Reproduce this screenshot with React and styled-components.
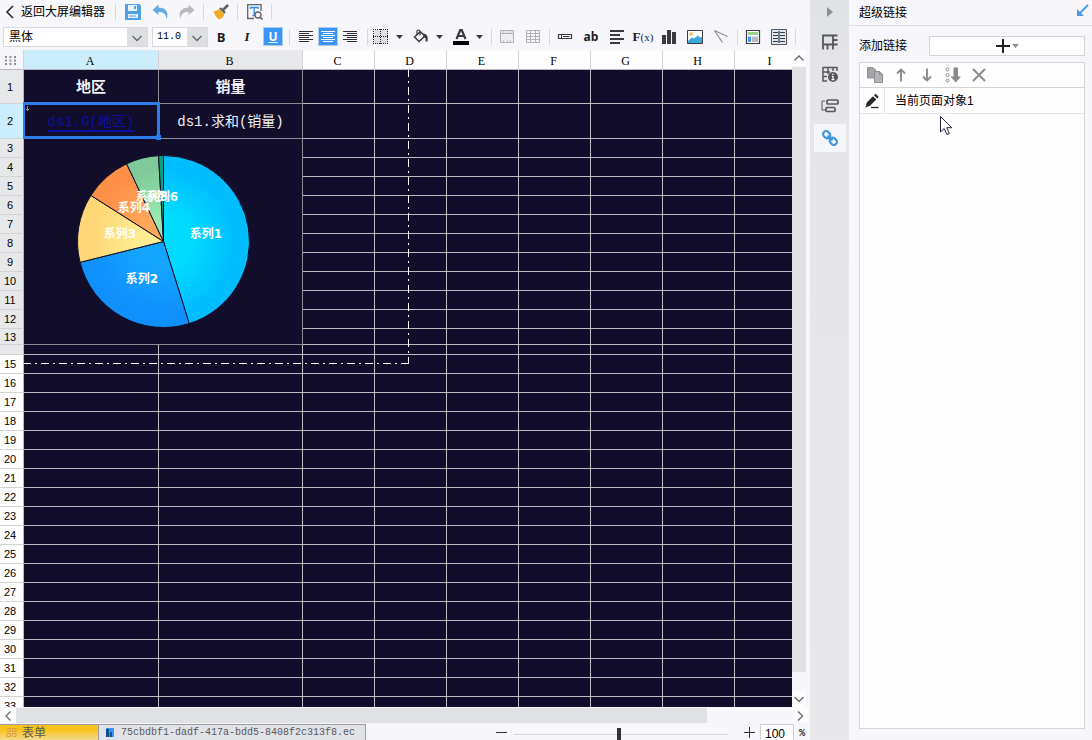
import React, { useState } from 'react'
import styled, { createGlobalStyle } from 'styled-components'

const GlobalStyle = createGlobalStyle`
  * {
    box-sizing: border-box;
  }

  body {
    margin: 0;
    overflow: hidden;
    font-family: "Liberation Sans", "Noto Sans CJK SC", sans-serif;
    font-size: 12px;
    line-height: 16px;
    color: #1c1c1e;
    background: #f6f6fb;
  }

  button, input, select {
    margin: 0;
    padding: 0;
    border: 0;
    border-radius: 0;
    outline: 0;
    font: inherit;
    color: inherit;
    background: none;
  }
`

const Page = styled.div`
  display: flex;
  height: 100vh;
`

const Editor = styled.main`
  display: flex;
  flex: 1;
  flex-direction: column;
  min-width: 0;
`

const Bar = styled.div`
  display: flex;
  align-items: center;
  height: ${(props) => props.$height}px;
  padding-left: 3px;
`

const BackButton = styled.button`
  display: flex;
  align-items: center;
  gap: 6px;
  width: 109px;
  white-space: nowrap;
  color: #000;
`

const ToolButton = styled.button`
  display: flex;
  flex: none;
  align-items: center;
  justify-content: center;
  width: ${(props) => props.$width || 26}px;
  height: 20px;
`

const Toggle = styled.span`
  display: flex;
  align-items: center;
  justify-content: center;
  width: 20px;
  height: 19px;
  border: 1px solid ${(props) => (props.$on ? '#a9cdf0' : 'transparent')};
  color: ${(props) => (props.$on ? '#fff' : '#2f2f33')};
  background: ${(props) => (props.$on ? '#3b95f5' : 'transparent')};
`

const Separator = styled.span`
  display: flex;
  flex: none;
  justify-content: center;
  width: ${(props) => props.$width || 6}px;

  &::after {
    content: "";
    width: 1px;
    height: 16px;
    background: #d8d8dc;
  }
`

const AlignGroup = styled.div`
  display: flex;
  padding: 0 3px;
`

const ColorGroup = styled.div`
  display: flex;
  gap: 4px;
  padding-right: 2px;
`

const ColorPair = styled.div`
  display: flex;
`

const Letter = styled.span`
  font-size: ${(props) => props.$size || 12}px;
  font-weight: bold;
  font-style: ${(props) => (props.$italic ? 'italic' : 'normal')};
  font-family: ${(props) => (props.$serif ? '"Liberation Serif", serif' : '"Open Sans", sans-serif')};
  line-height: 16px;
  text-decoration: ${(props) => (props.$underline ? 'underline' : 'none')};

  small {
    font-size: 11px;
    font-weight: normal;
  }
`

const SelectBox = styled.label`
  position: relative;
  display: flex;
  width: ${(props) => props.$width}px;
  height: 20px;
  margin-right: ${(props) => props.$gap || 0}px;
  border: 1px solid #dadade;
  background: linear-gradient(90deg, #fff calc(100% - 20px), #dedfe1 calc(100% - 20px));

  select {
    width: 100%;
    padding-left: ${(props) => (props.$mono ? 4 : 5)}px;
    appearance: none;
    color: #000;
    font-family: ${(props) => (props.$mono ? '"Liberation Mono", monospace' : 'inherit')};
    font-size: ${(props) => (props.$mono ? 10 : 12)}px;
  }

  svg {
    position: absolute;
    top: 5px;
    right: 5px;
    pointer-events: none;
  }
`

const SheetArea = styled.div`
  display: flex;
  flex: 1;
  min-height: 0;
  padding-right: 4px;
`

const SheetView = styled.div`
  position: relative;
  flex: 1;
  min-width: 0;
  overflow: hidden;
  background: #120d2a;
`

const Sheet = styled.table`
  width: 807px;
  table-layout: fixed;
  border-collapse: separate;
  border-spacing: 0;
`

const headColor = (props) => {
  if (props.$active) return '#cceefc'
  return props.$used ? '#e7e8ea' : '#fefefe'
}

const ColHead = styled.th`
  height: 20px;
  padding: 2px 2px 0 0;
  border-right: 1px solid #d3d3d6;
  border-bottom: 1px solid #b9b9bd;
  font: 12px/14px "Liberation Serif", serif;
  color: #000;
  background: ${headColor};
`

const Corner = styled(ColHead)`
  background: #f6f6fa;
`

const RowHead = styled.th`
  height: ${(props) => props.$height}px;
  padding: 0 3px 0 0;
  border-right: 1px solid #b9b9bd;
  border-bottom: 1px solid #d3d3d6;
  font-size: 11px;
  font-weight: normal;
  line-height: ${(props) => (props.$height < 12 ? 8 : 14)}px;
  color: #000;
  background: ${headColor};
`

const Cell = styled.td`
  position: relative;
  padding: 0;
  border-right: 1px solid ${(props) => (props.$dim ? '#8c8b95' : '#bebdc4')};
  border-bottom: 1px solid ${(props) => (props.$dim ? '#8c8b95' : '#bebdc4')};
`

const TextCell = styled(Cell)`
  padding-top: ${(props) => (props.$title ? 5 : 2)}px;
  font-family: "Liberation Mono", "Noto Sans CJK SC", monospace;
  font-size: ${(props) => (props.$title ? 15 : 14)}px;
  font-weight: ${(props) => (props.$title ? 'bold' : 'normal')};
  line-height: 20px;
  text-align: center;
  white-space: nowrap;
  color: #f0f0f4;
`

const CellLink = styled.a`
  color: #0c10a4;
  text-decoration: underline 2px;
  text-decoration-skip-ink: none;
  text-underline-offset: 4px;
`

const Selection = styled.span`
  position: absolute;
  z-index: 1;
  inset: -2px -2px -1px -1px;
  border: 3px solid #2b7de9;
  border-left-width: 2px;
  pointer-events: none;

  &::after {
    content: "";
    position: absolute;
    right: -4px;
    bottom: -4px;
    width: 5px;
    height: 5px;
    background: #2b7de9;
  }
`

const ExpandMark = styled.svg`
  position: absolute;
  top: 2px;
  left: 1px;
`

const Chart = styled.svg`
  display: block;
  margin: auto;

  text {
    font-family: "DejaVu Sans", "Noto Sans CJK SC", sans-serif;
    font-size: 12px;
    font-weight: bold;
    fill: #fff;
    text-anchor: middle;
  }
`

const PageEdge = styled.svg`
  position: absolute;
  top: 0;
  left: 0;
  pointer-events: none;
`

const VScroll = styled.div`
  display: flex;
  flex-direction: column;
  width: 14px;
`

const HScroll = styled.div`
  display: flex;
  height: 17px;
  padding: 1px 2px 1px 0;
`

const ScrollButton = styled.button`
  display: flex;
  flex: none;
  align-items: center;
  justify-content: center;
  width: ${(props) => (props.$wide ? 16 : 14)}px;
  height: ${(props) => (props.$wide ? 15 : 16)}px;
  background: #fdfdfe;
`

const Track = styled.div`
  display: flex;
  flex: 1;
  flex-direction: ${(props) => (props.$vertical ? 'column' : 'row')};
  padding-top: ${(props) => (props.$vertical ? 1 : 0)}px;
`

const Thumb = styled.div`
  flex: 0 0 ${(props) => props.$length}%;
  background: #e0e1e3;
`

const Footer = styled.footer`
  display: flex;
  height: 16px;
  overflow: hidden;
`

const SheetTab = styled.button`
  display: flex;
  align-items: center;
  gap: 5px;
  width: ${(props) => (props.$form ? 99 : 267)}px;
  height: 18px;
  padding: 0 0 2px 6px;
  border-top: 1px solid #9b9b9f;
  border-right: 1px solid #9b9b9f;
  white-space: nowrap;
  color: #55585c;
  background: ${(props) =>
    props.$form ? 'linear-gradient(#f9c31d 30%, #f3dfa6)' : '#e2e3e6'};
`

const FileName = styled.span`
  font: 10px/14px "Liberation Mono", monospace;
`

const Zoom = styled.div`
  display: flex;
  flex: 1;
  align-items: center;
  justify-content: flex-end;
  gap: 5px;
  height: 20px;
  padding-right: 2px;
`

const ZoomSlider = styled.input`
  width: 214px;
  height: 12px;
  margin: 0 11px 0 2px;
  appearance: none;
  background: linear-gradient(#d4d5d9, #d4d5d9) center / 100% 1px no-repeat;

  &::-webkit-slider-thumb {
    appearance: none;
    width: 4px;
    height: 12px;
    background: #333;
  }
`

const ZoomValue = styled.input`
  width: 34px;
  height: 20px;
  padding: 0 0 1px 4px;
  border: 1px solid #cfcfd4;
  color: #000;
  background: #fff;
`

const Percent = styled.label`
  width: 9px;
  font: bold 10px/14px "Liberation Mono", monospace;
`

const IconRail = styled.nav`
  display: flex;
  flex: none;
  flex-direction: column;
  align-items: center;
  gap: 4px;
  width: 39px;
  background: linear-gradient(#e0e2e6, #e5e5e8 60px, #e8e8eb);
`

const RailButton = styled.button`
  display: flex;
  align-items: center;
  justify-content: center;
  width: 32px;
  height: ${(props) => (props.$small ? 24 : 28)}px;
  color: #55575b;
  background: ${(props) => (props.$on ? '#f5f6fa' : 'none')};
`

const Panel = styled.aside`
  display: flex;
  flex: none;
  flex-direction: column;
  width: 243px;
`

const PanelHeader = styled.header`
  display: flex;
  align-items: center;
  justify-content: space-between;
  height: 26px;
  padding: 0 3px 0 10px;
  border-bottom: 1px solid #dedee3;
  color: #000;
`

const PanelBody = styled.div`
  display: flex;
  flex: 1;
  flex-direction: column;
  gap: 6px;
  padding: 10px 7px 11px 10px;
`

const Field = styled.div`
  display: flex;
  align-items: center;
  justify-content: space-between;
  color: #000;
`

const AddButton = styled.button`
  display: flex;
  align-items: center;
  justify-content: center;
  gap: 2px;
  width: 156px;
  height: 20px;
  border: 1px solid #d3d4d8;
  background: #fff;
`

const LinkBox = styled.section`
  flex: 1;
  border: 1px solid #d3d4d8;
  background: #fefefe;
`

const LinkTools = styled.div`
  display: flex;
  align-items: center;
  height: 25px;
  padding-left: 2px;
  border-bottom: 1px solid #d3d4d8;
`

const LinkRow = styled.div`
  position: relative;
  display: flex;
  align-items: center;
  height: 26px;
  border-bottom: 1px solid #e6e6ea;
  color: #000;
`

const EditButton = styled.button`
  display: flex;
  align-items: center;
  justify-content: center;
  width: 25px;
  height: 25px;
  margin-right: 10px;
  border-right: 1px solid #e6e6ea;
`

const Pointer = styled.svg`
  position: absolute;
  top: 28px;
  left: 80px;
  pointer-events: none;
`

const Icon = ({ size = 16, children }) => (
  <svg width={size} height={size} viewBox={`0 0 ${size} ${size}`} fill="none" aria-hidden="true">
    {children}
  </svg>
)

const chevrons = {
  down: 'M0.5 3 L5 7.5 L9.5 3',
  up: 'M0.5 7.5 L5 3 L9.5 7.5',
  left: 'M7.5 0.5 L3 5 L7.5 9.5',
  right: 'M3 0.5 L7.5 5 L3 9.5'
}

const Chevron = ({ to, color = '#66676b' }) => (
  <svg width="10" height="10" viewBox="0 0 10 10" fill="none">
    <path d={chevrons[to]} stroke={color} strokeWidth="1.3" />
  </svg>
)

const Caret = ({ color = '#3a3b3e' }) => (
  <svg width="7" height="4" viewBox="0 0 7 4">
    <path d="M0 0 H7 L3.5 4 Z" fill={color} />
  </svg>
)

const alignLines = {
  left: ['0-14', '0-10', '0-14', '0-10', '0-14', '0-10'],
  center: ['0-14', '2-12', '0-14', '2-12', '0-14', '2-12'],
  right: ['0-14', '4-14', '0-14', '4-14', '0-14', '4-14']
}

const AlignIcon = ({ side }) => (
  <svg width="14" height="12" viewBox="0 0 14 12" fill="none">
    {alignLines[side].map((line, i) => {
      const [from, to] = line.split('-')
      return <path key={i} d={`M${from} ${i * 2 + 0.5} H${to}`} stroke="currentColor" />
    })}
  </svg>
)

const SaveIcon = () => (
  <Icon>
    <path d="M0 0 H14 L16 2 V16 H0 Z" fill="#519fe6" />
    <path d="M3 1 H12 V7 H3 Z" fill="#e9f3fc" />
    <path d="M9 2 H11 V5 H9 Z" fill="#519fe6" />
    <path d="M3 10 H13 V14 H3 Z" fill="#e9f3fc" />
    <path d="M4 12 H11" stroke="#519fe6" />
  </Icon>
)

const UndoIcon = () => (
  <Icon>
    <path d="M6.5 0.5 L0.5 6 L6.5 11 V8 C11 7.5 14 10 14.5 15 C17.5 8 13 3.5 6.5 3.5 Z" fill="#67a9e2" />
  </Icon>
)

const RedoIcon = () => (
  <Icon>
    <path d="M9.5 0.5 L15.5 6 L9.5 11 V8 C5 7.5 2 10 1.5 15 C-1.5 8 3 3.5 9.5 3.5 Z" fill="#b9babd" />
  </Icon>
)

const BrushIcon = () => (
  <Icon>
    <path d="M15 1 L10 6" stroke="#606266" strokeWidth="2.6" />
    <path d="M7 4 L12 9" stroke="#606266" strokeWidth="2.4" />
    <path d="M6 5 L11.5 10.5 C10.5 13 8.5 15 6 15.5 C3.5 14 1.5 10.5 0.5 7 C3 7 4.5 6.5 6 5 Z" fill="#f3aa27" />
  </Icon>
)

const PreviewIcon = () => (
  <Icon>
    <path d="M7 14.5 H0.7 V0.7 H14 V7" stroke="#606266" strokeWidth="1.3" />
    <path d="M3.5 5 V3.5 H11 V5 M7.2 3.5 V11 M5.5 11.5 H8" stroke="#3b8de0" strokeWidth="1.4" />
    <circle cx="11" cy="11" r="3" stroke="#606266" strokeWidth="1.3" />
    <path d="M13 13 L15.5 15.5" stroke="#606266" strokeWidth="1.6" />
  </Icon>
)

const BorderIcon = () => (
  <Icon>
    <path d="M1 1 H15 V15 H1 Z" fill="#e0e0e3" />
    <path d="M0 0.5 H15 M0 7.5 H15 M0 14.5 H15 M0.5 0 V15 M7.5 0 V15 M14.5 0 V15" stroke="#222" strokeDasharray="1 1" />
  </Icon>
)

const BucketIcon = () => (
  <Icon>
    <path d="M6.5 3.5 L1.5 8 L6 12.5 L12 7 L7.5 3 Z" stroke="#3a3b3e" strokeWidth="1.5" />
    <path d="M4 6 V2 Q5.5 0 7 2 V6.5" stroke="#3a3b3e" strokeWidth="1.2" />
    <path d="M10.5 4.5 C14 5 15.5 7.5 14.5 12.5 H12.5 C13 9.5 12.5 8.5 10 8 Z" fill="#3a3b3e" />
  </Icon>
)

const FontColorIcon = () => (
  <Icon>
    <path d="M3.5 10 L7.5 0.5 H8.5 L12.5 10 M5 7 H11" stroke="#3a3b3e" strokeWidth="2.2" />
    <path d="M0 12 H16 V16 H0 Z" fill="#000" />
  </Icon>
)

const MergeIcon = () => (
  <Icon>
    <path d="M1.5 1.5 H14.5 V13.5 H1.5 Z M1.5 4.5 H14.5" fill="#eeeef1" stroke="#b0b1b5" />
    <path d="M4.5 2 V4 M8.5 2 V4 M11.5 2 V4 M4.5 11 V13 M8.5 11 V13 M11.5 11 V13" stroke="#c6c7ca" />
  </Icon>
)

const GridIcon = () => (
  <Icon>
    <path d="M1.5 1.5 H14.5 V13.5 H1.5 Z M1.5 4.5 H14.5 M1.5 7.5 H14.5 M1.5 10.5 H14.5 M5.5 1.5 V13.5 M10.5 1.5 V13.5" stroke="#b0b1b5" />
  </Icon>
)

const TextBoxIcon = () => (
  <Icon>
    <path d="M1.5 5.5 H14.5 V9.5 H1.5 Z" stroke="#3a3b3e" strokeWidth="1.2" />
    <path d="M4.5 5.5 V9.5 M6 7.5 H12.5" stroke="#3a3b3e" />
  </Icon>
)

const ParagraphIcon = () => (
  <Icon>
    <path d="M1 2 H15 M1 6 H11 M1 10 H15 M1 14 H11" stroke="#3a3b3e" strokeWidth="2" />
  </Icon>
)

const BarsIcon = () => (
  <Icon>
    <path d="M1 6 H5 V15 H1 Z M6 1 H10 V15 H6 Z M11 3 H15 V15 H11 Z" fill="#3a3b3e" />
  </Icon>
)

const PictureIcon = () => (
  <Icon>
    <path d="M0.5 1.5 H15.5 V14.5 H0.5 Z" fill="#fff" stroke="#3a3b3e" />
    <circle cx="4" cy="5" r="1.7" fill="#f2b63c" />
    <path d="M1 12 L5 8.5 L7 9.5 L11 6.5 L13 8.5 L15 8 V14 H1 Z" fill="#37a9dc" />
  </Icon>
)

const SlashIcon = () => (
  <Icon>
    <path d="M1.5 1.5 L14.5 7.5 M1.5 1.5 L9.5 13.5" stroke="#8d8e92" strokeWidth="1.2" />
  </Icon>
)

const ReportIcon = () => (
  <Icon>
    <path d="M1.5 1.5 H14.5 V14.5 H1.5 Z" fill="#fff" stroke="#3a3b3e" strokeWidth="1.2" />
    <path d="M3 3 H13 V6 H3 Z" fill="#9ad08a" />
    <path d="M3 7.5 H6 V13 H3 Z" fill="#3b95f5" />
    <path d="M7 7.5 H13 V13 H7 Z" fill="#b9bac6" />
  </Icon>
)

const BookIcon = () => (
  <Icon>
    <path d="M0.5 0.5 H15.5 V15.5 H0.5 Z" fill="#dbe7f4" stroke="#55575b" />
    <path d="M8 2 V14 M2 3.5 H7 M9 3.5 H14 M2 6.5 H7 M9 6.5 H14 M2 9.5 H7 M9 9.5 H14 M2 12.5 H7 M9 12.5 H14" stroke="#3a3b3e" strokeWidth="1.2" />
  </Icon>
)

const CellIcon = () => (
  <Icon>
    <path d="M1 15.5 V1.5 H15.5 M1 10.5 H15.5 M11 1.5 V15.5 M5.5 10.5 V15.5 M11 6 H15.5" stroke="currentColor" strokeWidth="1.8" />
  </Icon>
)

const CellInfoIcon = () => (
  <Icon>
    <path d="M5 15 H1 V1.5 H15 V5 M1 6 H8 M1 10.5 H5 M6 1.5 V8 M11 1.5 V5" stroke="currentColor" strokeWidth="1.5" />
    <circle cx="11" cy="11" r="5" fill="currentColor" />
    <path d="M11 7.5 V9 M11 10 V14 M9.8 10.3 H11 M9.5 13.7 H12.5" stroke="#fff" strokeWidth="1.2" />
  </Icon>
)

const WidgetIcon = () => (
  <svg width="18" height="14" viewBox="0 0 18 14" fill="none">
    <path d="M4 2 H1 V11 H4" stroke="currentColor" />
    <rect x="6" y="1" width="11" height="4" rx="1" stroke="currentColor" strokeWidth="1.7" />
    <rect x="5" y="8.5" width="9" height="4" rx="1" stroke="currentColor" strokeWidth="1.7" />
  </svg>
)

const HyperlinkIcon = () => (
  <Icon>
    <rect x="-3.8" y="-3" width="7.6" height="6" rx="3" transform="translate(4.7 4.7) rotate(45)" stroke="#4397e0" strokeWidth="2.2" />
    <rect x="-3.8" y="-3" width="7.6" height="6" rx="3" transform="translate(11.3 11.3) rotate(45)" stroke="#4397e0" strokeWidth="2.2" />
    <path d="M5.5 5.5 L10.5 10.5" stroke="#4397e0" strokeWidth="2" />
  </Icon>
)

const CopyIcon = () => (
  <Icon>
    <path d="M0.5 0.5 H6 L8.5 3 V11 H0.5 Z" fill="#a4a5a8" stroke="#8d8e92" />
    <path d="M7.5 4.5 H12.5 L15.5 7.5 V15.5 H7.5 Z" fill="#b3b4b7" stroke="#8d8e92" />
    <path d="M12.5 4.5 V7.5 H15.5" stroke="#8d8e92" />
  </Icon>
)

const ArrowIcon = ({ down }) => (
  <Icon>
    <path
      d={down ? 'M8 1.5 V13 M4 9.5 L8 13.5 L12 9.5' : 'M8 14.5 V3 M4 6.5 L8 2.5 L12 6.5'}
      stroke="#8a8b8f"
      strokeWidth="1.9"
    />
  </Icon>
)

const SortIcon = () => (
  <Icon>
    <circle cx="2.5" cy="2.5" r="1.5" stroke="#8a8b8f" />
    <circle cx="2.5" cy="8" r="1.5" stroke="#8a8b8f" />
    <circle cx="2.5" cy="13.5" r="1.5" stroke="#8a8b8f" />
    <path d="M8.5 0.5 H13 V9.5 H16 L10.8 15.5 L5.5 9.5 H8.5 Z" fill="#8a8b8f" />
  </Icon>
)

const RemoveIcon = () => (
  <Icon>
    <path d="M2 2 L14 14 M14 2 L2 14" stroke="#8a8b8f" strokeWidth="2" />
  </Icon>
)

const PencilIcon = () => (
  <Icon>
    <path d="M1.5 14.5 L2.8 9.5 L9 3.2 L12.3 6.5 L6 12.8 Z M10 2.2 L11.5 0.7 L14.6 3.8 L13.2 5.4 Z" fill="#26272a" />
    <path d="M7 14.5 H14.5" stroke="#26272a" strokeWidth="1.3" />
  </Icon>
)

const columns = [
  { name: 'A', width: 135 },
  { name: 'B', width: 144 },
  { name: 'C', width: 72 },
  { name: 'D', width: 72 },
  { name: 'E', width: 72 },
  { name: 'F', width: 72 },
  { name: 'G', width: 72 },
  { name: 'H', width: 72 },
  { name: 'I', width: 72 }
]

const rowHeights = { 1: 34, 2: 35, 13: 16, 14: 10 }
const rows = Array.from({ length: 33 }, (_, i) => i + 1)

const series = [
  { name: '系列1', from: 0, to: 162.6, fill: 'url(#cyan)', x: 182, y: 99 },
  { name: '系列2', from: 162.6, to: 256, fill: 'url(#blue)', x: 118, y: 144 },
  { name: '系列3', from: 256, to: 302.4, fill: 'url(#yellow)', x: 96, y: 99 },
  { name: '系列4', from: 302.4, to: 334.6, fill: 'url(#orange)', x: 110, y: 73 },
  { name: '系列5', from: 334.6, to: 356.7, fill: 'url(#green)', x: 128, y: 62 },
  { name: '系列6', from: 356.7, to: 360, fill: '#0c9f83', x: 138, y: 62 }
]

const gradients = [
  ['cyan', '#00dcff', '#00bdff'],
  ['blue', '#14a5ff', '#1090fc'],
  ['yellow', '#ffec90', '#ffd777'],
  ['orange', '#ffa75a', '#ff9048'],
  ['green', '#9ae8b0', '#7fca98']
]

const CX = 139.5
const CY = 102.5
const R = 86

const point = (deg) => {
  const rad = (deg * Math.PI) / 180
  return `${CX + R * Math.sin(rad)} ${CY - R * Math.cos(rad)}`
}

const PieChart = () => (
  <Chart width="278" height="205" viewBox="0 0 278 205">
    <defs>
      {gradients.map(([id, inner, outer]) => (
        <radialGradient key={id} id={id} gradientUnits="userSpaceOnUse" cx={CX} cy={CY} r={R}>
          <stop offset="0.3" stopColor={inner} />
          <stop offset="0.85" stopColor={outer} />
        </radialGradient>
      ))}
    </defs>
    {series.map((item) => (
      <path
        key={item.name}
        d={`M${CX} ${CY} L${point(item.from)} A${R} ${R} 0 0 1 ${point(item.to)} Z`}
        fill={item.fill}
        stroke="#10102a"
      />
    ))}
    {series.map((item) => (
      <text key={item.name} x={item.x} y={item.y}>{item.name}</text>
    ))}
  </Chart>
)

const SheetRow = ({ row }) => {
  const inChart = row >= 3 && row <= 13
  const height = rowHeights[row] || 19

  return (
    <tr>
      <RowHead scope="row" $height={height} $active={row === 2} $used={row <= 14}>
        {row !== 14 && row}
      </RowHead>
      {row === 3 && (
        <Cell colSpan={2} rowSpan={11} $dim>
          <PieChart />
        </Cell>
      )}
      {row === 1 && (
        <>
          <TextCell $dim $title>地区</TextCell>
          <TextCell $dim $title>销量</TextCell>
        </>
      )}
      {row === 2 && (
        <>
          <TextCell $dim>
            <CellLink href="#link">ds1.G(地区)</CellLink>
            <Selection />
            <ExpandMark width="5" height="5" viewBox="0 0 5 5">
              <path d="M2.5 0 V5 M0.5 2.5 L2.5 4.5 L4.5 2.5" stroke="#8c8b95" fill="none" />
            </ExpandMark>
          </TextCell>
          <TextCell $dim>ds1.求和(销量)</TextCell>
        </>
      )}
      {columns.slice(inChart || row < 3 ? 2 : 0).map((col) => (
        <Cell key={col.name} />
      ))}
    </tr>
  )
}

const TopBar = () => (
  <Bar $height={23}>
    <BackButton>
      <svg width="12" height="14" viewBox="0 0 12 14" fill="none">
        <path d="M10 1 L4 7 L10 13" stroke="#222" strokeWidth="1.5" />
      </svg>
      返回大屏编辑器
    </BackButton>
    <Separator $width={7} />
    <ToolButton $width={27} aria-label="保存"><SaveIcon /></ToolButton>
    <ToolButton $width={27} aria-label="撤销"><UndoIcon /></ToolButton>
    <ToolButton $width={27} aria-label="重做"><RedoIcon /></ToolButton>
    <Separator $width={7} />
    <ToolButton $width={27} aria-label="格式刷"><BrushIcon /></ToolButton>
    <Separator $width={7} />
    <ToolButton $width={27} aria-label="预览"><PreviewIcon /></ToolButton>
    <Separator $width={7} />
  </Bar>
)

const FormatBar = () => {
  const [align, setAlign] = useState('center')
  const [underline, setUnderline] = useState(true)

  return (
    <Bar $height={27}>
      <SelectBox $width={145} $gap={4}>
        <select aria-label="字体" defaultValue="黑体">
          <option>黑体</option>
          <option>宋体</option>
        </select>
        <Chevron to="down" />
      </SelectBox>
      <SelectBox $width={56} $mono>
        <select aria-label="字号" defaultValue="11.0">
          <option>11.0</option>
          <option>12.0</option>
        </select>
        <Chevron to="down" />
      </SelectBox>
      <ToolButton><Letter $size={13}>B</Letter></ToolButton>
      <ToolButton><Letter $italic $serif $size={13}>I</Letter></ToolButton>
      <ToolButton onClick={() => setUnderline(!underline)}>
        <Toggle $on={underline}><Letter $underline>U</Letter></Toggle>
      </ToolButton>
      <Separator />
      <AlignGroup>
        {['left', 'center', 'right'].map((side) => (
          <ToolButton key={side} $width={22} aria-label={side} onClick={() => setAlign(side)}>
            <Toggle $on={align === side}><AlignIcon side={side} /></Toggle>
          </ToolButton>
        ))}
      </AlignGroup>
      <Separator />
      <ColorGroup>
        <ColorPair>
          <ToolButton $width={22} aria-label="边框"><BorderIcon /></ToolButton>
          <ToolButton $width={14} aria-label="边框选项"><Caret /></ToolButton>
        </ColorPair>
        <ColorPair>
          <ToolButton $width={22} aria-label="填充"><BucketIcon /></ToolButton>
          <ToolButton $width={14} aria-label="填充选项"><Caret /></ToolButton>
        </ColorPair>
        <ColorPair>
          <ToolButton $width={22} aria-label="文字颜色"><FontColorIcon /></ToolButton>
          <ToolButton $width={14} aria-label="文字颜色选项"><Caret /></ToolButton>
        </ColorPair>
      </ColorGroup>
      <Separator />
      <ToolButton aria-label="合并"><MergeIcon /></ToolButton>
      <ToolButton aria-label="拆分"><GridIcon /></ToolButton>
      <Separator />
      <ToolButton aria-label="控件"><TextBoxIcon /></ToolButton>
      <ToolButton><Letter>ab</Letter></ToolButton>
      <ToolButton aria-label="富文本"><ParagraphIcon /></ToolButton>
      <ToolButton><Letter $serif $size={13}>F<small>(x)</small></Letter></ToolButton>
      <ToolButton aria-label="图表"><BarsIcon /></ToolButton>
      <ToolButton aria-label="图片"><PictureIcon /></ToolButton>
      <ToolButton aria-label="斜线"><SlashIcon /></ToolButton>
      <Separator />
      <ToolButton aria-label="报表块"><ReportIcon /></ToolButton>
      <ToolButton aria-label="子报表"><BookIcon /></ToolButton>
      <Separator />
    </Bar>
  )
}

const StatusBar = () => (
  <Footer>
    <SheetTab $form>
      <svg width="11" height="9" viewBox="0 0 11 9" fill="none">
        <path d="M1 0.5 H4.5 V3.5 H1 M6.5 0.5 H10 V3.5 H6.5 Z M1 5.5 H4.5 V8.5 H1 Z M6.5 5.5 H10 V8.5 H6.5 Z" stroke="#d99c48" />
      </svg>
      表单
    </SheetTab>
    <SheetTab>
      <svg width="11" height="9" viewBox="0 0 11 9">
        <path d="M1 0 H9 V9 H1 Z" fill="#3b95f5" />
        <path d="M1 1 H4 V9 H1 Z M5 4 H7 V9 H5 Z" fill="#10508f" />
      </svg>
      <FileName>75cbdbf1-dadf-417a-bdd5-8408f2c313f8.ec</FileName>
    </SheetTab>
    <Zoom>
      <button aria-label="缩小">
        <svg width="11" height="11" viewBox="0 0 11 11"><path d="M0 5.5 H11" stroke="#333" /></svg>
      </button>
      <ZoomSlider type="range" aria-label="缩放" min="0" max="100" defaultValue="49" />
      <button aria-label="放大">
        <svg width="11" height="11" viewBox="0 0 11 11"><path d="M0 5.5 H11 M5.5 0 V11" stroke="#333" /></svg>
      </button>
      <ZoomValue id="zoom" defaultValue="100" />
      <Percent htmlFor="zoom">%</Percent>
    </Zoom>
  </Footer>
)

const LinkPanel = () => (
  <Panel>
    <PanelHeader>
      超级链接
      <button aria-label="收起">
        <svg width="13" height="13" viewBox="0 0 13 13" fill="none">
          <path d="M12 1 L4 9" stroke="#4a9be3" strokeWidth="1.8" />
          <path d="M1 5 V12 H8 Z" fill="#4a9be3" />
        </svg>
      </button>
    </PanelHeader>
    <PanelBody>
      <Field>
        添加链接
        <AddButton aria-label="添加链接">
          <svg width="14" height="14" viewBox="0 0 14 14"><path d="M0 7 H14 M7 0 V14" stroke="#222" strokeWidth="2" /></svg>
          <Caret color="#909195" />
        </AddButton>
      </Field>
      <LinkBox>
        <LinkTools>
          <ToolButton aria-label="复制"><CopyIcon /></ToolButton>
          <ToolButton aria-label="上移"><ArrowIcon /></ToolButton>
          <ToolButton aria-label="下移"><ArrowIcon down /></ToolButton>
          <ToolButton aria-label="排序"><SortIcon /></ToolButton>
          <ToolButton aria-label="删除"><RemoveIcon /></ToolButton>
        </LinkTools>
        <LinkRow>
          <EditButton aria-label="编辑"><PencilIcon /></EditButton>
          当前页面对象1
          <Pointer width="13" height="20" viewBox="0 0 13 20">
            <path d="M0.5 0.5 V16 L4.2 12.5 L6.8 18.5 L9.3 17.5 L6.8 11.7 H11.8 Z" fill="#fff" stroke="#1d2440" />
          </Pointer>
        </LinkRow>
      </LinkBox>
    </PanelBody>
  </Panel>
)

const App = () => {
  return (
    <Page>
      <GlobalStyle />
      <Editor>
        <TopBar />
        <FormatBar />
        <SheetArea>
          <SheetView>
            <Sheet>
              <colgroup>
                <col style={{ width: 24 }} />
                {columns.map((col) => (
                  <col key={col.name} style={{ width: col.width }} />
                ))}
              </colgroup>
              <thead>
                <tr>
                  <Corner>
                    <svg width="11" height="9" viewBox="0 0 11 9" fill="none">
                      <path d="M0 1 H11 M0 4.5 H11 M0 8 H11" stroke="#8f9095" strokeWidth="2" strokeDasharray="2 2.5" />
                    </svg>
                  </Corner>
                  {columns.map((col) => (
                    <ColHead key={col.name} scope="col" $active={col.name === 'A'} $used={col.name === 'B'}>
                      {col.name}
                    </ColHead>
                  ))}
                </tr>
              </thead>
              <tbody>
                {rows.map((row) => <SheetRow key={row} row={row} />)}
              </tbody>
            </Sheet>
            <PageEdge width="410" height="315" viewBox="0 0 410 315" fill="none">
              <path d="M408.5 20 V314 M24 313.5 H409" stroke="#fff" strokeDasharray="8 4 2 4" strokeDashoffset="1" />
            </PageEdge>
          </SheetView>
          <VScroll>
            <ScrollButton aria-label="向上"><Chevron to="up" /></ScrollButton>
            <Track $vertical><Thumb $length={97} /></Track>
            <ScrollButton aria-label="向下"><Chevron to="down" /></ScrollButton>
          </VScroll>
        </SheetArea>
        <HScroll>
          <ScrollButton $wide aria-label="向左"><Chevron to="left" /></ScrollButton>
          <Track><Thumb $length={89} /></Track>
          <ScrollButton $wide aria-label="向右"><Chevron to="right" /></ScrollButton>
        </HScroll>
        <StatusBar />
      </Editor>
      <IconRail>
        <RailButton $small aria-label="折叠">
          <svg width="6" height="10" viewBox="0 0 6 10"><path d="M0 0 L6 5 L0 10 Z" fill="#8e8f93" /></svg>
        </RailButton>
        <RailButton aria-label="单元格元素"><CellIcon /></RailButton>
        <RailButton aria-label="单元格属性"><CellInfoIcon /></RailButton>
        <RailButton aria-label="控件设置"><WidgetIcon /></RailButton>
        <RailButton $on aria-label="超级链接"><HyperlinkIcon /></RailButton>
      </IconRail>
      <LinkPanel />
    </Page>
  )
}

export default App
